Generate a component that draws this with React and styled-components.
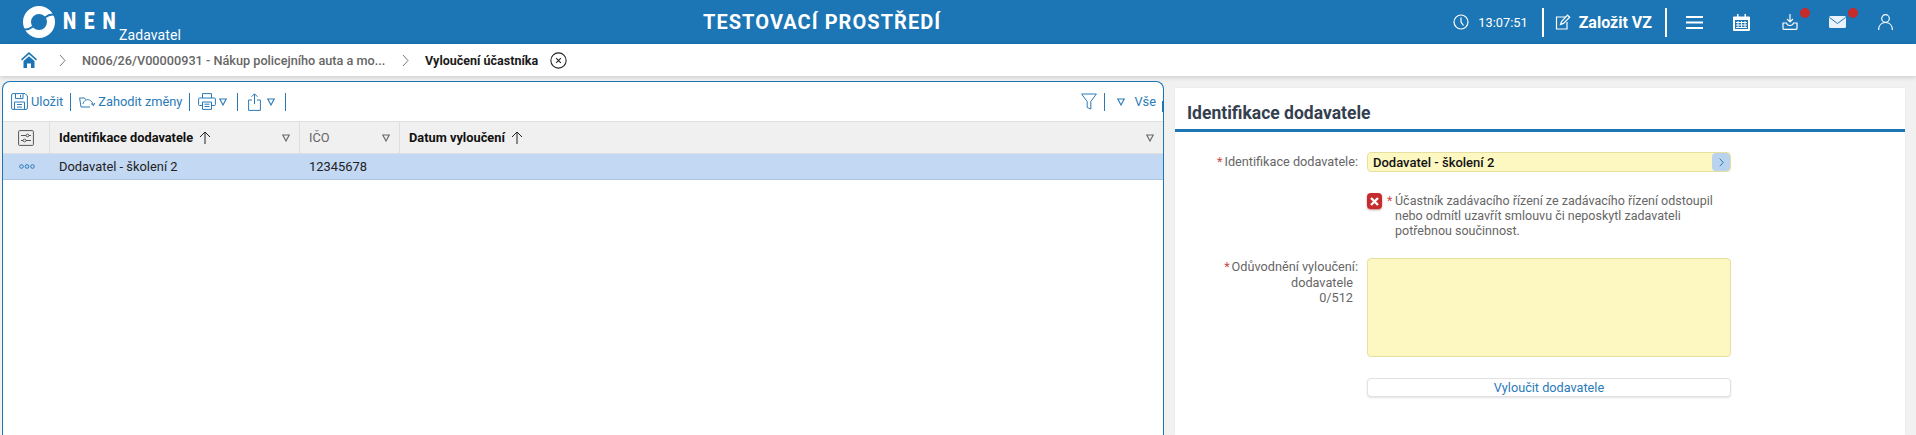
import React from "react";
import styled, { createGlobalStyle } from "styled-components";

const Global = createGlobalStyle`
  html, body { margin: 0; padding: 0; height: 435px; overflow: hidden; background: #f1f1f1; }
  body { font-family: Roboto, "Liberation Sans", sans-serif; font-size: 13px; color: #333; }
  * { box-sizing: border-box; }
`;

const BLUE = "#1c75b4";
const LINK = "#2a7ab8";

const Page = styled.div`display: flex; flex-direction: column; width: 1916px; height: 435px; overflow: hidden;`;

const TopBar = styled.header`
  height: 44px; background: ${BLUE}; color: #fff; display: flex; align-items: center;
  padding: 0 23px; position: relative; flex: none;
`;
const Brand = styled.div`display: flex; align-items: flex-start; width: 300px; height: 44px;`;
const BrandName = styled.span`
  display: block; width: 56px; margin: 9px 0 0 8px; font-weight: 900; font-size: 24px; line-height: 24px;
  letter-spacing: 10.2px; transform: scaleX(.78); transform-origin: left center; white-space: nowrap;
`;
const BrandRole = styled.span`font-size: 14px; line-height: 16px; margin: 27px 0 0 0; letter-spacing: .1px;`;
const EnvTitle = styled.div`
  flex: none; width: 400px; margin-left: 321px; padding-left: 59px;
  font-weight: 700; font-size: 20px; letter-spacing: 1.05px; white-space: nowrap;
`;
const TopRight = styled.div`margin-left: auto; display: flex; align-items: center; height: 44px;`;
const Clock = styled.div`display: flex; align-items: center; gap: 9px; font-size: 12.8px; margin-right: 14px;`;
const TopSep = styled.i`width: 2px; height: 29px; background: #fff; display: block; flex: none;`;
const CreateBtn = styled.div`display: flex; align-items: center; gap: 8px; font-size: 16px; font-weight: 700; padding: 0 13px 0 11px;`;
const TopIcon = styled.span`position: relative; display: flex; margin-left: ${p => p.$ml || 0}px;`;
const Dot = styled.i`
  position: absolute; width: 10px; height: 10px; border-radius: 50%; background: #c62c2c; top: ${p => p.$top}px; right: -12px;
`;

const Crumbs = styled.nav`
  height: 32px; background: #fff; box-shadow: 0 1px 5px rgba(0,0,0,.18); display: flex; align-items: center;
  padding-left: 21px; flex: none; position: relative; z-index: 1;
`;
const CrumbLink = styled.span`font-size: 12.7px; font-weight: 500; color: #666; width: 303px; margin: 0 17px 0 16px; white-space: nowrap;`;
const CrumbNow = styled.span`font-size: 12.5px; font-weight: 700; color: #1a1a1a; margin: 0 12px 0 16px; white-space: nowrap;`;

const Main = styled.main`flex: 1; display: flex; align-items: flex-start; padding: 5px 11px 0 2px; min-height: 0;`;

const GridPanel = styled.section`
  width: 1162px; height: 360px; background: #fff; border: 1px solid ${BLUE}; border-bottom: 0;
  border-radius: 8px 8px 0 0; flex: none; display: flex; flex-direction: column;
`;
const Toolbar = styled.div`
  height: 39px; display: flex; align-items: center; padding-left: 8px; color: ${LINK}; font-size: 12.8px; flex: none; position: relative;
  &::after { content: ""; position: absolute; right: -1px; top: 19px; width: 2px; height: 11px; background: ${BLUE}; }
`;
const ToolBtn = styled.span`display: flex; align-items: center; gap: ${p => p.$gap ?? 3}px; white-space: nowrap;`;
const ToolSep = styled.i`width: 1px; height: 18px; background: ${LINK}; display: block; margin: ${p => p.$m || "0 8px"}; flex: none;`;
const Spacer = styled.div`flex: 1;`;

const Cols = "47px 250px 100px 1fr";
const HeadRow = styled.div`
  display: grid; grid-template-columns: ${Cols}; height: 33px; background: #f0f0f0;
  border-top: 1px solid #dedede; border-bottom: 1px solid #dedede; flex: none;
`;
const HeadCell = styled.div`
  display: flex; align-items: center; padding: 0 9px 0 ${p => p.$pl ?? 6}px; border-right: ${p => p.$last ? 0 : "1px solid #dedede"};
  font-size: 12.8px; font-weight: ${p => p.$muted ? 400 : 700}; color: ${p => p.$muted ? "#666" : "#111"}; white-space: nowrap;
  justify-content: ${p => p.$center ? "center" : "flex-start"};
`;
const SortArrow = styled.span`display: flex; margin-left: 6px;`;
const CellFilter = styled.span`margin-left: auto; display: flex;`;
const DataRow = styled.div`
  display: grid; grid-template-columns: ${Cols}; height: 26px; background: #c2d8f3; border-bottom: 1px solid #a9c6e6;
  align-items: center; font-size: 12.9px; color: #222; flex: none;
`;
const DataCell = styled.div`padding-left: ${p => p.$pl ?? 6}px; display: flex; justify-content: ${p => p.$center ? "center" : "flex-start"};`;

const DetailPanel = styled.section`
  margin: 7px 0 0 11px; width: 730px; height: 347px; background: #fff; flex: none; box-shadow: 0 0 2px rgba(0,0,0,.05);
`;
const DetailTitle = styled.h2`
  margin: 0; height: 44px; border-bottom: 3px solid ${BLUE}; padding: 13px 0 0 12px;
  font-size: 17.5px; line-height: 24px; font-weight: 700; color: #34404f;
`;
const Form = styled.div`padding-top: 20px; display: grid; grid-template-columns: 183px 364px; column-gap: 9px;`;
const Label = styled.label`
  font-size: 12.7px; line-height: 15.5px; color: #666; text-align: right; padding-top: ${p => p.$pt ?? 0}px;
`;
const LabelTail = styled.span`display: block; padding-right: 5px;`;
const Star = styled.span`color: #c94a4a; margin-right: 2px;`;
const Combo = styled.div`
  height: 20px; background: #fdf7c2; border: 1px solid #e7dfa0; border-radius: 4px; display: flex; align-items: center;
  justify-content: space-between; font-size: 13px; font-weight: 500; color: #111; padding-left: 5px; grid-column: 2;
`;
const ComboBtn = styled.span`
  width: 18px; height: 18px; background: #b9d3ef; border-radius: 4px; display: flex; align-items: center; justify-content: center;
`;
const Notice = styled.div`display: flex; grid-column: 2; margin-top: 21px; gap: 5px; align-items: flex-start;`;
const ErrBadge = styled.span`
  width: 15px; height: 16px; background: #c62c2c; border-radius: 4px; flex: none; display: flex; align-items: center; justify-content: center;
  box-shadow: 0 1px 2px rgba(140,20,20,.5);
`;
const NoticeText = styled.p`
  margin: 0; font-size: 12.5px; line-height: 15px; color: #666; width: 340px; position: relative; padding-left: 8px;
`;
const NoticeStar = styled.span`color: #c94a4a; position: absolute; left: 0; top: 0;`;
const Area = styled.div`
  grid-column: 2; height: 99px; background: #fdf7c2; border: 1px solid #e7dfa0; border-radius: 4px; margin-top: 20px;
`;
const AreaLabel = styled(Label)`grid-column: 1; grid-row: 3; margin-top: 20px; padding-top: 1px;`;
const SubmitBtn = styled.div`
  grid-column: 2; height: 19px; margin-top: 21px; background: #fff; border: 1px solid #e2e2e2; border-radius: 4px; box-shadow: 0 1px 2px rgba(0,0,0,.12);
  color: ${LINK}; font-size: 12.7px; display: flex; align-items: center; justify-content: center;
`;

const Tri = ({ c = LINK, s = 8 }) => (
  <svg width={s} height={s} viewBox="0 0 8 8"><path d="M.8 1h6.400L4 7z" fill="none" stroke={c} strokeWidth="1.100" /></svg>
);
const Chevron = ({ c = "#777" }) => (
  <svg width="7" height="13" viewBox="0 0 7 13" style={{ flex: "none" }}><path d="M1 1l5 5.500L1 12" fill="none" stroke={c} strokeWidth="1" /></svg>
);
const Logo = () => (
  <svg width="32" height="32" viewBox="0 0 32 32" fill="none" style={{ marginTop: 6, flex: "none" }}>
    <circle cx="16" cy="16" r="12" stroke="#fff" strokeWidth="8" />
    <path d="M32.500 9Q27 7.500 22 11.500" stroke={BLUE} strokeWidth="2" />
    <path d="M-.5 23Q5 24.500 10 20.500" stroke={BLUE} strokeWidth="2" />
  </svg>
);
const W = { fill: "none", stroke: "#fff", strokeWidth: 1.2 };
const L = { fill: "none", stroke: LINK, strokeWidth: 1 };
const G = { fill: "none", stroke: "#555", strokeWidth: 1 };

export default function App() {
  return (
    <Page>
      <Global />
      <TopBar>
        <Brand>
          <Logo />
          <BrandName>NEN</BrandName>
          <BrandRole>Zadavatel</BrandRole>
        </Brand>
        <EnvTitle>TESTOVACÍ PROSTŘEDÍ</EnvTitle>
        <TopRight>
          <Clock>
            <svg width="16" height="16" viewBox="0 0 16 16" {...W}><circle cx="8" cy="8" r="7" /><path d="M8 3.500V8l2.500 3.500" /></svg>
            13:07:51
          </Clock>
          <TopSep />
          <CreateBtn>
            <svg width="16" height="16" viewBox="0 0 16 16" {...W}><path d="M11 3H1.500v12H12V8" /><path d="M5.500 10.500l1-3L12.500 1.200l2.200 2-6.200 6.200z" /></svg>
            Založit VZ
          </CreateBtn>
          <TopSep />
          <TopIcon $ml={19}>
            <svg width="17" height="13" viewBox="0 0 17 13" fill="#fff"><rect y="0" width="17" height="2"/><rect y="5.500" width="17" height="2"/><rect y="11" width="17" height="2"/></svg>
          </TopIcon>
          <TopIcon $ml={30}>
            <svg width="17" height="17" viewBox="0 0 17 17"><path fill="#fff" d="M1 2.500h3V0h1.500v2.500h6V0H13v2.500h3a1 1 0 011 1V16a1 1 0 01-1 1H1a1 1 0 01-1-1V3.500a1 1 0 011-1z"/><path fill={BLUE} d="M2 6h13v9H2z"/><path stroke="#fff" strokeWidth="1" d="M3 8.500h11M3 11h11M3 13.500h11M5 7v7M8.500 7v7M12 7v7"/></svg>
          </TopIcon>
          <TopIcon $ml={32}>
            <svg width="16" height="16" viewBox="0 0 16 16" {...W}><path d="M8 0v8M5 5l3 3 3-3" /><path d="M4.500 9H1v5.500a.8.8 0 00.8.8h12.400a.8.8 0 00.8-.8V9h-3.500c-.3 1.500-1.500 2.500-3.500 2.500S4.800 10.500 4.500 9z" /></svg>
            <Dot $top={-6} />
          </TopIcon>
          <TopIcon $ml={31}>
            <svg width="17" height="12" viewBox="0 0 17 12"><rect width="17" height="12" rx="1.500" fill="#eaf3fb"/><path d="M.5 1.500L8.500 7.500l8-6" fill="none" stroke={BLUE} strokeWidth="1"/></svg>
            <Dot $top={-8} />
          </TopIcon>
          <TopIcon $ml={32}>
            <svg width="15" height="16" viewBox="0 0 15 16" {...W}><circle cx="7.500" cy="4.500" r="3.800" /><path d="M.6 16c0-4.500 2.800-7.500 6.900-7.500s6.900 3 6.900 7.500" /></svg>
          </TopIcon>
        </TopRight>
      </TopBar>

      <Crumbs>
        <svg width="16" height="16" viewBox="0 0 16 16" style={{ flex: "none", marginRight: 22 }}><path fill={BLUE} d="M8 0L0 7.200l1 1.200L8 2.200l7 6.200 1-1.200z"/><path fill={BLUE} d="M2.500 9L8 4.200 13.500 9v7H10v-4.500H6V16H2.500z"/></svg>
        <Chevron />
        <CrumbLink>N006/26/V00000931 - Nákup policejního auta a mo...</CrumbLink>
        <Chevron />
        <CrumbNow>Vyloučení účastníka</CrumbNow>
        <svg width="17" height="17" viewBox="0 0 16 16" fill="none" stroke="#222"><circle cx="8" cy="8" r="7.200" /><path d="M5.800 5.800l4.400 4.400M10.200 5.800l-4.400 4.400" /></svg>
      </Crumbs>

      <Main>
        <GridPanel>
          <Toolbar>
            <ToolBtn>
              <svg width="17" height="17" viewBox="0 0 17 17" {...L}><path d="M2 .6h12l2.400 2.400v12a1.400 1.400 0 01-1.400 1.400H2A1.400 1.400 0 01.6 15V2A1.400 1.400 0 012 .6z" /><path d="M4.500.6v5h7.500v-5M9.500 2v2.500M3.500 16.400V9h10v7.400M6 11.500h5M6 14h5" /></svg>
              Uložit
            </ToolBtn>
            <ToolSep $m="0 8px 0 7px" />
            <ToolBtn>
              <svg width="16" height="12" viewBox="0 0 16 12" {...L}><path d="M.6 2h4.900l1 1.500M.6 2l1.400 9h9" /><path d="M4 8C5 3 12 1 14.500 9.500M12 7.500l2.500 2.200L15.800 7" /></svg>
              Zahodit změny
            </ToolBtn>
            <ToolSep $m="0 8px 0 7px" />
            <ToolBtn>
              <svg width="18" height="17" viewBox="0 0 18 17" {...L}><path d="M4.500 5V.6h9V5M4.500 12.500H1.600a1 1 0 01-1-1V6a1 1 0 011-1h14.800a1 1 0 011 1v5.500a1 1 0 01-1 1h-2.900" /><path d="M4.500 9h9v7.400h-9zM6.500 11.200h5M6.500 13.500h5" /></svg>
              <Tri />
            </ToolBtn>
            <ToolSep $m="0 10px 0 10px" />
            <ToolBtn $gap={6}>
              <svg width="13" height="18" viewBox="0 0 13 18" {...L}><path d="M4 7H.6v10.400h11.800V7H9M6.500 1v10M3.500 3.800L6.500.8l3 3" /></svg>
              <Tri />
            </ToolBtn>
            <ToolSep $m="0 0 0 10px" />
            <Spacer />
            <svg width="16" height="17" viewBox="0 0 16 17" {...L}><path d="M.6 1h14.800L9.800 8.500V16l-3.600-1.500v-6z" /></svg>
            <ToolSep $m="0 12px 0 7px" />
            <ToolBtn $gap={9} style={{ marginRight: 7 }}><Tri />Vše</ToolBtn>
          </Toolbar>
          <HeadRow>
            <HeadCell $center $pl={9}>
              <svg width="16" height="16" viewBox="0 0 16 16" style={{ flex: "none" }} {...G}><rect x=".6" y=".6" width="14.800" height="14.800" rx="1" /><path d="M3 5.500h5M11 5.500h2M3 10.500h2M8 10.500h5" /><circle cx="9.500" cy="5.500" r="1.400" /><circle cx="6.500" cy="10.500" r="1.400" /></svg>
            </HeadCell>
            <HeadCell $pl={9}>
              Identifikace dodavatele
              <SortArrow><svg width="12" height="13" viewBox="0 0 12 13" fill="none" stroke="#222"><path d="M6 13V1M1 6l5-5 5 5" /></svg></SortArrow>
              <CellFilter><Tri c="#666" /></CellFilter>
            </HeadCell>
            <HeadCell $muted $pl={9}>
              IČO
              <CellFilter><Tri c="#666" /></CellFilter>
            </HeadCell>
            <HeadCell $pl={9} $last>
              Datum vyloučení
              <SortArrow><svg width="12" height="13" viewBox="0 0 12 13" fill="none" stroke="#222"><path d="M6 13V1M1 6l5-5 5 5" /></svg></SortArrow>
              <CellFilter><Tri c="#666" /></CellFilter>
            </HeadCell>
          </HeadRow>
          <DataRow>
            <DataCell $center $pl={0}>
              <svg width="16" height="5" viewBox="0 0 16 5" fill="none" stroke={LINK}><circle cx="2.500" cy="2.500" r="1.800" /><circle cx="8" cy="2.500" r="1.800" /><circle cx="13.500" cy="2.500" r="1.800" /></svg>
            </DataCell>
            <DataCell $pl={9}>Dodavatel - školení 2</DataCell>
            <DataCell $pl={9}>12345678</DataCell>
            <DataCell />
          </DataRow>
        </GridPanel>

        <DetailPanel>
          <DetailTitle>Identifikace dodavatele</DetailTitle>
          <Form>
            <Label $pt={2}><Star>*</Star>Identifikace dodavatele:</Label>
            <Combo>
              Dodavatel - školení 2
              <ComboBtn><svg width="5" height="9" viewBox="0 0 5 9"><path d="M.7.7L4.300 4.500.7 8.300" fill="none" stroke={LINK} strokeWidth="1" /></svg></ComboBtn>
            </Combo>
            <Notice>
              <ErrBadge><svg width="9" height="9" viewBox="0 0 9 9"><path d="M1 1l7 7M8 1L1 8" stroke="#fff" strokeWidth="2.400" /></svg></ErrBadge>
              <NoticeText><NoticeStar>*</NoticeStar>Účastník zadávacího řízení ze zadávacího řízení odstoupil nebo odmítl uzavřít smlouvu či neposkytl zadavateli potřebnou součinnost.</NoticeText>
            </Notice>
            <AreaLabel>
              <Star>*</Star>Odůvodnění vyloučení:
              <LabelTail>dodavatele</LabelTail>
              <LabelTail>0/512</LabelTail>
            </AreaLabel>
            <Area />
            <SubmitBtn>Vyloučit dodavatele</SubmitBtn>
          </Form>
        </DetailPanel>
      </Main>
    </Page>
  );
}
